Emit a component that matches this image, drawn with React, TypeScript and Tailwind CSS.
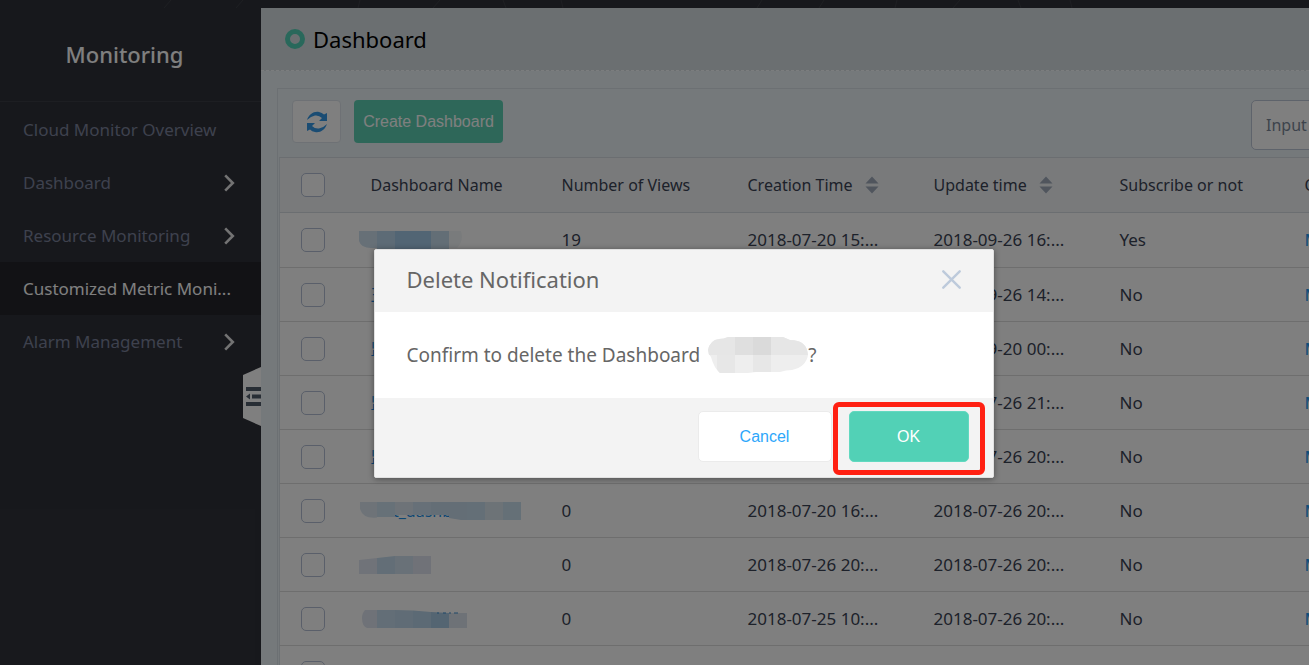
import React from "react";

type Row = {
  mask?: "a" | "b" | "c" | "d";
  name?: string;
  views?: string;
  created?: string;
  updated?: string;
  subscribed?: string;
};

const rows: Row[] = [
  { mask: "a", views: "19", created: "2018-07-20 15:...", updated: "2018-09-26 16:...", subscribed: "Yes" },
  { name: "王", updated: "2018-09-26 14:...", subscribed: "No" },
  { name: "监", updated: "2018-09-20 00:...", subscribed: "No" },
  { name: "监", updated: "2018-07-26 21:...", subscribed: "No" },
  { name: "监", updated: "2018-07-26 20:...", subscribed: "No" },
  { mask: "b", name: "test_dashb", views: "0", created: "2018-07-20 16:...", updated: "2018-07-26 20:...", subscribed: "No" },
  { mask: "c", views: "0", created: "2018-07-26 20:...", updated: "2018-07-26 20:...", subscribed: "No" },
  { mask: "d", views: "0", created: "2018-07-25 10:...", updated: "2018-07-26 20:...", subscribed: "No" },
  {},
];

const navItems = [
  { label: "Cloud Monitor Overview", arrow: false, active: false },
  { label: "Dashboard", arrow: true, active: false },
  { label: "Resource Monitoring", arrow: true, active: false },
  { label: "Customized Metric Moni...", arrow: false, active: true },
  { label: "Alarm Management", arrow: true, active: false },
];

function Chevron() {
  return (
    <svg width="11" height="18" viewBox="0 0 11 18" fill="none" stroke="#e6e6e6" strokeWidth="2.6" aria-hidden="true">
      <path d="M1.2 1.4 8.8 9 1.2 16.6" />
    </svg>
  );
}

function SortIcon() {
  return (
    <svg width="14" height="18" viewBox="0 0 14 18" fill="#a0abbb" aria-hidden="true">
      <path d="M7 .5 13.5 7.500H.5zM7 17.500.5 10.500h13z" />
    </svg>
  );
}

function Tick({ label }: { label: string }) {
  return (
    <input
      type="checkbox"
      aria-label={label}
      className="block size-6 appearance-none rounded-[5px] border border-[#b4bfd4] bg-white"
    />
  );
}

function NameMask({ kind }: { kind: string }) {
  if (kind === "a")
    return (
      <svg width="104" height="20" viewBox="0 0 104 20" aria-hidden="true">
        <path d="M0 1H18V18H12Q2 18 0 11z" fill="#cfe0ee" />
        <path d="M18 1h18v18H18z" fill="#bbd7ec" />
        <path d="M36 1h36v18H36z" fill="#a5cbe8" />
        <path d="M72 1h18v18H72z" fill="#c6dded" />
        <path d="M90 1h12q3 10-4 17h-8z" fill="#f3f6f8" />
      </svg>
    );
  if (kind === "b")
    return (
      <svg width="162" height="20" viewBox="0 0 162 20" aria-hidden="true">
        <path d="M1 1h17v15.500Q4 18 1 8z" fill="#dce7f1" />
        <path d="M18 1h18v15H18z" fill="#cfe2f0" />
        <path d="M36 1h18v13H36z" fill="#dce6f0" />
        <path d="M54 1h18v13H54z" fill="#cfe1f0" />
        <path d="M72 1h36v18h-6L90 17V14H72z" fill="#c9ddec" />
        <path d="M108 1h18v18h-18z" fill="#c9dfee" />
        <path d="M126 1h18v18h-18z" fill="#dbe6ef" />
        <path d="M144 1h18v18h-18z" fill="#cae0ef" />
      </svg>
    );
  if (kind === "c")
    return (
      <svg width="72" height="20" viewBox="0 0 72 20" aria-hidden="true">
        <path d="M0 5 18 3V19H0z" fill="#e1e6f2" />
        <path d="M18 3 36 1V19H18z" fill="#c6ddee" />
        <path d="M36 1h18v18H36z" fill="#d2e2f0" />
        <path d="M54 1h18v18H54z" fill="#e0e5f1" />
      </svg>
    );
  return (
    <svg width="108" height="20" viewBox="0 0 108 20" aria-hidden="true">
      <path d="M6 1H18V19H8Q3 17 3 9 3 4 6 1z" fill="#dfe5f0" />
      <path d="M18 1h18v18H18z" fill="#c6ddee" />
      <path d="M36 1 54 1.500V19H36z" fill="#c0d9ec" />
      <path d="M54 1.500 72 3V19H54z" fill="#b9d4ea" />
      <path d="M72 3 90 4V19H72z" fill="#a9cae5" />
      <path d="M90 4h18v15H90z" fill="#dce4ef" />
      <path d="M78 4h2M84 4h3M90 4h2M95 4h4" stroke="#3d8fd0" />
    </svg>
  );
}

export default function App() {
  return (
    <div className="relative h-screen overflow-hidden bg-[#2f3139] font-['Noto_Sans','Noto_Sans_CJK_SC',sans-serif] text-base text-[#3a4354]">
      <svg className="absolute top-0 left-0" width="1309" height="8" stroke="#3d3f46" fill="none" aria-hidden="true">
        <path d="M164 8l7-8M236 8l7-8M358 8l2-8M433 8l7-8M506 8l-3-8M563 8l-2-8M757 8l5-8M819 8l5-8M895 8l2-8M953 8l7-8M1021 8l-3-8M1072 8l-2-8" />
      </svg>
      <div className="flex h-full pt-2">
        <aside className="relative w-[261px] shrink-0">
          <h1 className="flex h-[94px] items-center justify-center border-b border-[#3b3d44] pr-3 text-[22px] font-medium text-white">
            Monitoring
          </h1>
          <nav className="flex flex-col pt-px">
            {navItems.map((n) => (
              <a
                key={n.label}
                href="#"
                className={
                  n.active
                    ? "flex h-[53px] items-center bg-[#24252b] pl-[23px] text-[17px] text-white"
                    : "flex h-[53px] items-center justify-between pr-[26px] pl-[23px] text-[17px] text-[#7c839c]"
                }
              >
                <span className="whitespace-nowrap">{n.label}</span>
                {n.arrow && <Chevron />}
              </a>
            ))}
          </nav>
          <button aria-label="Collapse menu" className="absolute top-[358px] right-0">
            <svg width="18" height="60" viewBox="0 0 18 60" aria-hidden="true">
              <path d="M0 9 18 1V60L0 52z" fill="#fff" />
              <path d="M3 21h15v4H3zM9 28.500h9v4H9zM3 36h15v4H3zM3 30.500l4-3v6z" fill="#505c6b" />
            </svg>
          </button>
        </aside>
        <main className="min-w-0 flex-1 overflow-hidden bg-[#ebf2f7]">
          <header className="flex h-[63px] items-center gap-2 border-b border-dashed border-[#f6fafc] bg-[#d7dee3] pl-6 text-[22px] text-black">
            <span className="size-5 rounded-full border-[5px] border-[#52d1b6]" />
            <h2>Dashboard</h2>
          </header>
          <section className="mt-[17px] ml-4 w-[1161px] border border-[#d9e1e7] pl-px">
            <div className="flex h-[68px] items-start pt-[11px] pl-[13px]">
              <button aria-label="Refresh" className="flex h-[43px] w-[49px] items-center justify-center rounded border border-[#dce3ea] bg-white">
                <svg width="22" height="22" viewBox="0 0 22 22" fill="#3498e6" aria-hidden="true">
                  <path d="M1 9C3 3 8 0 13 1q3 .5 5 2.500L21 2v8h-8l3-3Q13 4 9 4.500 5 5 1 9zM21 13c-2 6-7 9-12 8q-3-.5-5-2.500L1 20v-8h8l-3 3q3 3 7 2.500 4-.5 8-4.500z" />
                </svg>
              </button>
              <button className="ml-[13px] h-[43px] w-[149px] rounded bg-[#5dcfb3] font-['Liberation_Sans',sans-serif] text-base text-white">
                Create Dashboard
              </button>
              <input
                aria-label="Search dashboards"
                placeholder="Input dashboard name"
                className="ml-auto h-[50px] w-[186px] rounded-[5px] border border-[#bdc7d6] bg-white px-3.5 text-base placeholder:text-[#7a8798]"
              />
            </div>
            <table className="w-full table-fixed border-l border-[#d9e1e7] bg-white text-left">
              <colgroup>
                <col className="w-[79px]" />
                <col className="w-[191px]" />
                <col className="w-[186px]" />
                <col className="w-[186px]" />
                <col className="w-[186px]" />
                <col className="w-[185px]" />
                <col />
              </colgroup>
              <thead>
                <tr className="h-[55px] border-y border-[#d6dce3] bg-[#f2f4f7] *:p-0 *:font-normal">
                  <th><div className="pl-[21px]"><Tick label="Select all" /></div></th>
                  <th><div className="pl-3">Dashboard Name</div></th>
                  <th><div className="pl-3">Number of Views</div></th>
                  <th><div className="flex items-center gap-3 pl-3">Creation Time <SortIcon /></div></th>
                  <th><div className="flex items-center gap-3 pl-3">Update time <SortIcon /></div></th>
                  <th><div className="pl-3">Subscribe or not</div></th>
                  <th><div className="pl-3">Operation</div></th>
                </tr>
              </thead>
              <tbody>
                {rows.map((r, i) => (
                  <tr key={i} className="h-[54px] border-b border-[#dcdcdc] text-[17px] first:h-[55px] *:p-0">
                    <td><div className="pl-[21px]"><Tick label={`Select row ${i + 1}`} /></div></td>
                    <td>
                      <div className="relative h-5 text-base leading-5">
                        {r.name && <a href="#" className="pl-3 text-[#1a8fe8]">{r.name}</a>}
                        {r.mask && (
                          <span className="absolute top-0 left-0">
                            <NameMask kind={r.mask} />
                          </span>
                        )}
                      </div>
                    </td>
                    <td><div className="pl-3">{r.views}</div></td>
                    <td><div className="pl-3">{r.created}</div></td>
                    <td><div className="pl-3">{r.updated}</div></td>
                    <td><div className="pl-3">{r.subscribed}</div></td>
                    <td><div className="pl-3 text-[#2196ee]">{r.subscribed && <a href="#">Modify</a>}</div></td>
                  </tr>
                ))}
              </tbody>
            </table>
          </section>
        </main>
      </div>

      <div className="absolute inset-0 bg-black/50 pt-[249px] pl-[58px]">
        <div role="dialog" aria-labelledby="dialog-title" className="mx-auto w-[620px] rounded-xs border border-[#e0e0e0] bg-white text-[#666] shadow-[0_1px_6px_rgba(0,0,0,0.4)]">
          <div className="flex h-[62px] items-center justify-between bg-[#f3f3f3] px-8 pb-1">
            <h3 id="dialog-title" className="text-[22px]">Delete Notification</h3>
            <button aria-label="Close">
              <svg width="19" height="19" viewBox="0 0 19 19" stroke="#bdcadb" strokeWidth="2.400" strokeLinecap="round" aria-hidden="true">
                <path d="M1.300 1.300 17.700 17.700M17.700 1.300 1.300 17.700" />
              </svg>
            </button>
          </div>
          <p className="flex h-[86px] items-center pl-8 text-[19px]">
            Confirm to delete the Dashboard
            <svg className="ml-2" width="100" height="38" viewBox="0 0 100 38" aria-hidden="true">
              <path d="M0 14Q2 4 11 3 16 3 20 1H75L82 4Q99 4 100 19 98 31 84 34 78 34 72 36H48L40 37H12Q6 32 3 21 0 18 0 14z" fill="#eee" />
              <path d="M1 19H100Q99 4 82 4L75 1H20Q16 3 11 3 2 4 0 14z" fill="#e6e6e6" />
              <path d="M27 1H45V19H27z" fill="#dfdfdf" />
              <path d="M45 1H63V19H45z" fill="#dadada" />
              <path d="M9 19H27V37H12Q9 34 9 33zM45 19H63V36H45z" fill="#e7e7e7" />
            </svg>
            ?
          </p>
          <div className="flex h-[79px] items-start justify-end gap-[17px] bg-[#f3f3f3] pt-[13px] pr-6 font-['Liberation_Sans',sans-serif] text-base">
            <button className="h-[51px] w-[134px] rounded-[5px] border border-[#ebebeb] bg-white text-[#2ea7fb]">Cancel</button>
            <div className="relative">
              <button className="h-[51px] w-[120px] rounded-[5px] border border-[#62d9c0] bg-[#52d1b6] text-white">OK</button>
              <span className="pointer-events-none absolute -inset-x-4 -top-[9px] -bottom-[13px] rounded-md border-[5px] border-[#ff2012]" />
            </div>
          </div>
        </div>
      </div>
    </div>
  );
}
